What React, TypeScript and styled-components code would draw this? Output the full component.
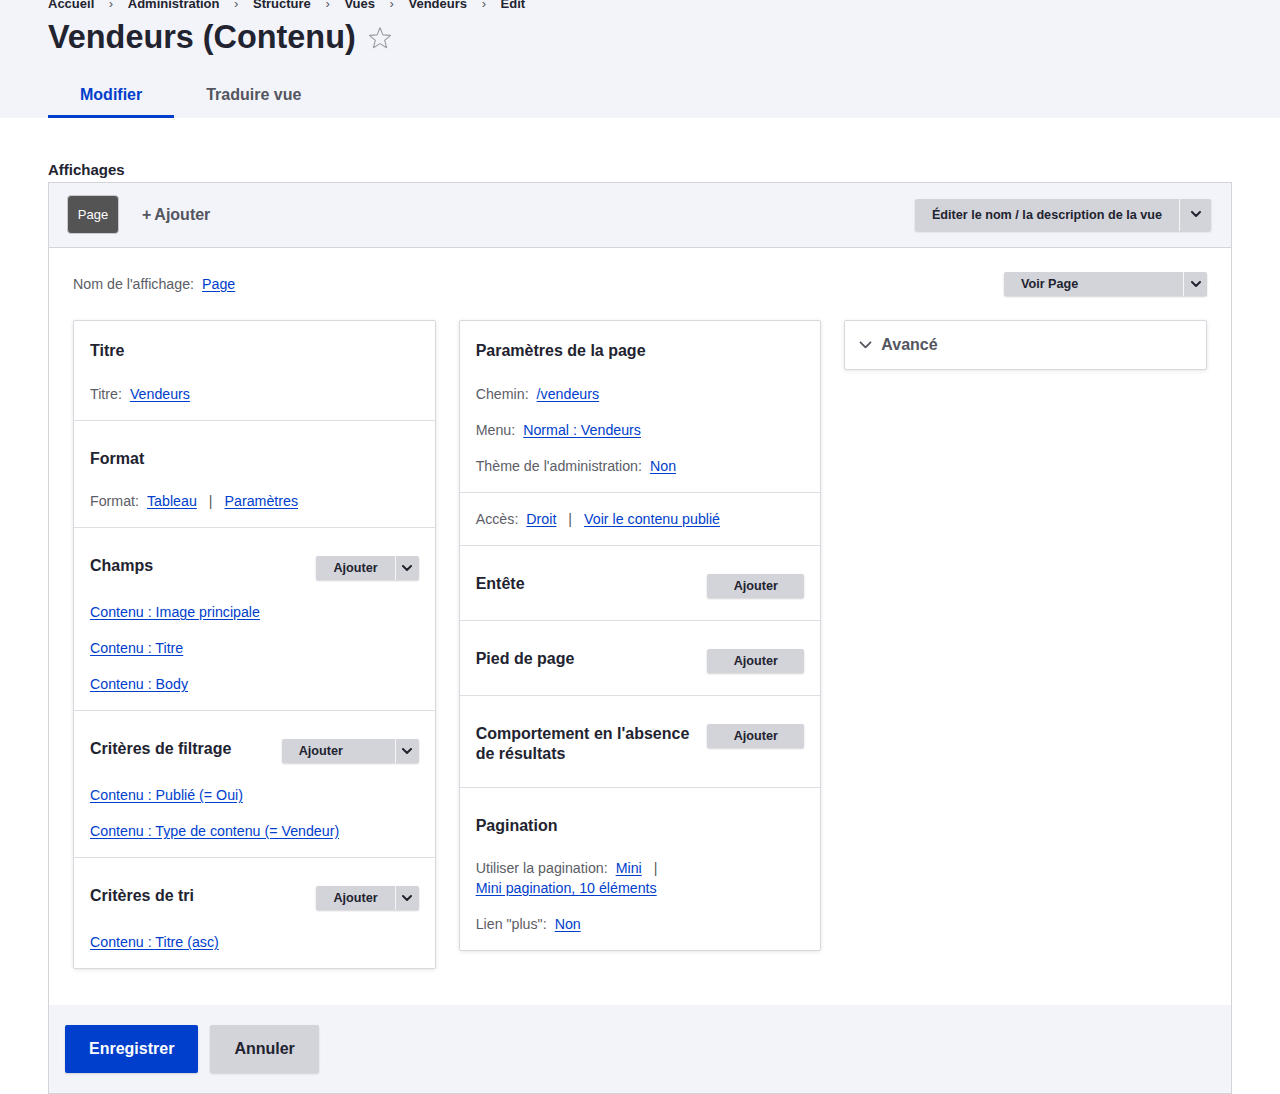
import React from 'react';
import styled, { createGlobalStyle } from 'styled-components';

const Global = createGlobalStyle`
  html, body { margin: 0; padding: 0; background: #fff; }
  body { font-family: "Liberation Sans", Arial, sans-serif; color: #222330; }
  * { box-sizing: border-box; }
`;

const Header = styled.header`
  display: flow-root;
  background: #f3f4f9;
  padding: 0 48px;
`;

const Breadcrumb = styled.nav`
  display: flex;
  align-items: center;
  margin-top: -4px;
  font-size: 13px;
  line-height: 16px;
  font-weight: 700;
  color: #222330;
`;

const Crumb = styled.span``;

const CrumbSep = styled.span`
  margin: 0 14.6px;
  font-weight: 400;
  color: #545560;
`;

const TitleRow = styled.div`
  display: flex;
  align-items: center;
  margin-top: 5px;
  height: 40px;
`;

const Title = styled.h1`
  margin: 0;
  font-size: 32.4px;
  line-height: 40px;
  font-weight: 700;
  color: #222330;
`;

const StarIcon = styled.svg`
  margin-left: 12px;
  margin-top: 2px;
`;

const Tabs = styled.div`
  display: flex;
  margin-top: 13px;
`;

const Tab = styled.span<{ $active?: boolean }>`
  height: 48px;
  padding: 2px 32px 0;
  line-height: 46px;
  font-size: 16px;
  font-weight: 700;
  color: ${p => (p.$active ? '#003ecc' : '#545560')};
  box-shadow: ${p => (p.$active ? 'inset 0 -3px 0 #003ecc' : 'none')};
`;

const Main = styled.main`
  padding: 42px 48px 0;
`;

const SectionTitle = styled.h2`
  margin: 0;
  font-size: 15px;
  line-height: 20px;
  font-weight: 700;
`;

const Container = styled.div`
  margin-top: 2px;
  border: 1px solid #d3d4d9;
  border-bottom: 0;
`;

const TopBar = styled.div`
  display: flex;
  align-items: center;
  height: 65px;
  padding: 0 20px 1px 18px;
  background: #f3f4f9;
  border-bottom: 1px solid #d3d4d9;
`;

const DisplayTab = styled.span`
  display: flex;
  align-items: center;
  justify-content: center;
  width: 52px;
  height: 39px;
  border-radius: 4px;
  background: #545454;
  border: 1px solid #c9cacf;
  color: #fff;
  font-size: 13px;
`;

const AddDisplay = styled.span`
  margin-left: 23px;
  font-size: 16px;
  font-weight: 700;
  color: #545560;
`;

const Plus = styled.span`
  margin-right: 3px;
`;

const Spacer = styled.div`
  flex: 1;
`;

const DropWrap = styled.div<{ $h: number }>`
  display: inline-flex;
  flex-shrink: 0;
  height: ${p => p.$h}px;
  border-radius: 2px;
  background: #d3d4d9;
  box-shadow: 0 1px 2px rgba(0, 0, 0, 0.18);
`;

const DropMain = styled.span<{ $w?: number }>`
  display: flex;
  align-items: center;
  padding: 0 17px;
  ${p => (p.$w ? `width: ${p.$w}px;` : '')}
  font-size: 12.64px;
  font-weight: 700;
  color: #222330;
  white-space: nowrap;
`;

const DropToggle = styled.span<{ $h: number }>`
  display: flex;
  align-items: center;
  justify-content: center;
  width: ${p => p.$h}px;
  border-left: 1px solid #f5f5f7;
`;

const SimpleButton = styled.span`
  display: flex;
  flex-shrink: 0;
  align-items: center;
  justify-content: center;
  width: 97px;
  height: 24px;
  border-radius: 2px;
  background: #d3d4d9;
  box-shadow: 0 1px 2px rgba(0, 0, 0, 0.18);
  font-size: 12.64px;
  font-weight: 700;
  color: #222330;
`;

const Body = styled.div`
  padding: 24px 24px 36px;
  background: #fff;
`;

const NameRow = styled.div`
  display: flex;
  align-items: center;
  height: 24px;
  font-size: 14.22px;
`;

const Grid = styled.div`
  display: grid;
  grid-template-columns: repeat(3, 1fr);
  gap: 23px;
  align-items: start;
  margin-top: 24px;
`;

const Card = styled.div`
  background: #fff;
  border: 1px solid #d8d9de;
  border-radius: 2px;
  box-shadow: 0 1px 4px rgba(0, 0, 0, 0.1);
`;

const Section = styled.div<{ $bottom?: number }>`
  padding: 16px 16px ${p => p.$bottom ?? 16}px;
  & + & {
    border-top: 1px solid #dedfe4;
  }
`;

const SectionHeader = styled.div<{ $first?: boolean }>`
  display: flex;
  align-items: flex-start;
  justify-content: space-between;
  gap: 16px;
  margin-top: ${p => (p.$first ? 4 : 12)}px;
`;

const Heading = styled.h3`
  margin: 0;
  font-size: 16px;
  line-height: 20px;
  font-weight: 700;
  color: #222330;
`;

const Rows = styled.div<{ $gap: number }>`
  display: flex;
  flex-direction: column;
  gap: 16px;
  margin-top: ${p => p.$gap}px;
`;

const Row = styled.div`
  font-size: 14.22px;
  line-height: 20px;
  color: #55565b;
`;

const Label = styled.span`
  color: #5c5d66;
  margin-right: 8px;
`;

const Link = styled.a`
  color: #003ecc;
  text-decoration: underline;
  text-underline-offset: 2px;
  white-space: nowrap;
  cursor: pointer;
`;

const Sep = styled.span`
  margin: 0 12px;
  color: #55565b;
`;

const AdvancedCard = styled(Card)`
  display: flex;
  align-items: center;
  height: 50px;
  padding-left: 14px;
  gap: 9px;
  font-size: 16px;
  font-weight: 700;
  color: #545560;
`;

const Footer = styled.div`
  display: flex;
  gap: 12px;
  padding: 20px 16px;
  background: #f3f4f9;
  border-bottom: 1px solid #d3d4d9;
`;

const FooterButton = styled.span<{ $primary?: boolean }>`
  display: flex;
  align-items: center;
  height: 48px;
  padding: 0 24px;
  border-radius: 2px;
  font-size: 16px;
  font-weight: 700;
  background: ${p => (p.$primary ? '#003ecc' : '#d3d4d9')};
  color: ${p => (p.$primary ? '#fff' : '#222330')};
  box-shadow: 0 1px 2px rgba(0, 0, 0, 0.15);
`;

const Chevron = ({ color = '#222330', w = 10, sw = 2 }: { color?: string; w?: number; sw?: number }) => (
  <svg width={w} height={w * 0.6 + 1} viewBox="0 0 10 7" fill="none">
    <path d="M1 1l4 4 4-4" stroke={color} strokeWidth={sw} strokeLinecap="round" strokeLinejoin="round" />
  </svg>
);

const Dropbutton = ({ label, h, w }: { label: string; h: number; w?: number }) => (
  <DropWrap $h={h}>
    <DropMain $w={w}>{label}</DropMain>
    <DropToggle $h={h}>
      <Chevron />
    </DropToggle>
  </DropWrap>
);

const crumbs = ['Accueil', 'Administration', 'Structure', 'Vues', 'Vendeurs', 'Edit'];

export default function App() {
  return (
    <>
      <Global />
      <Header>
        <Breadcrumb>
          {crumbs.map((c, i) => (
            <React.Fragment key={c}>
              {i > 0 && <CrumbSep>›</CrumbSep>}
              <Crumb>{c}</Crumb>
            </React.Fragment>
          ))}
        </Breadcrumb>
        <TitleRow>
          <Title>Vendeurs (Contenu)</Title>
          <StarIcon width="24" height="24" viewBox="0 0 24 24" fill="none">
            <path
              d="M12 1.8l2.9 7.1 7.6.5-5.8 4.9 1.9 7.4L12 17.6l-6.6 4.1 1.9-7.4-5.8-4.9 7.6-.5z"
              stroke="#9a9aa0"
              strokeWidth="1.1"
              strokeLinejoin="round"
            />
          </StarIcon>
        </TitleRow>
        <Tabs>
          <Tab $active>Modifier</Tab>
          <Tab>Traduire vue</Tab>
        </Tabs>
      </Header>
      <Main>
        <SectionTitle>Affichages</SectionTitle>
        <Container>
          <TopBar>
            <DisplayTab>Page</DisplayTab>
            <AddDisplay>
              <Plus>+</Plus>Ajouter
            </AddDisplay>
            <Spacer />
            <Dropbutton label="Éditer le nom / la description de la vue" h={32} />
          </TopBar>
          <Body>
            <NameRow>
              <Label>Nom de l'affichage:</Label>
              <Link>Page</Link>
              <Spacer />
              <Dropbutton label="Voir Page" h={24} w={179} />
            </NameRow>
            <Grid>
              <Card>
                <Section>
                  <SectionHeader $first>
                    <Heading>Titre</Heading>
                  </SectionHeader>
                  <Rows $gap={23}>
                    <Row>
                      <Label>Titre:</Label>
                      <Link>Vendeurs</Link>
                    </Row>
                  </Rows>
                </Section>
                <Section>
                  <SectionHeader>
                    <Heading>Format</Heading>
                  </SectionHeader>
                  <Rows $gap={22}>
                    <Row>
                      <Label>Format:</Label>
                      <Link>Tableau</Link>
                      <Sep>|</Sep>
                      <Link>Paramètres</Link>
                    </Row>
                  </Rows>
                </Section>
                <Section>
                  <SectionHeader>
                    <Heading>Champs</Heading>
                    <Dropbutton label="Ajouter" h={24} />
                  </SectionHeader>
                  <Rows $gap={22}>
                    <Row>
                      <Link>Contenu : Image principale</Link>
                    </Row>
                    <Row>
                      <Link>Contenu : Titre</Link>
                    </Row>
                    <Row>
                      <Link>Contenu : Body</Link>
                    </Row>
                  </Rows>
                </Section>
                <Section>
                  <SectionHeader>
                    <Heading>Critères de filtrage</Heading>
                    <Dropbutton label="Ajouter" h={24} w={113} />
                  </SectionHeader>
                  <Rows $gap={22}>
                    <Row>
                      <Link>Contenu : Publié (= Oui)</Link>
                    </Row>
                    <Row>
                      <Link>Contenu : Type de contenu (= Vendeur)</Link>
                    </Row>
                  </Rows>
                </Section>
                <Section>
                  <SectionHeader>
                    <Heading>Critères de tri</Heading>
                    <Dropbutton label="Ajouter" h={24} />
                  </SectionHeader>
                  <Rows $gap={22}>
                    <Row>
                      <Link>Contenu : Titre (asc)</Link>
                    </Row>
                  </Rows>
                </Section>
              </Card>

              <Card>
                <Section>
                  <SectionHeader $first>
                    <Heading>Paramètres de la page</Heading>
                  </SectionHeader>
                  <Rows $gap={23}>
                    <Row>
                      <Label>Chemin:</Label>
                      <Link>/vendeurs</Link>
                    </Row>
                    <Row>
                      <Label>Menu:</Label>
                      <Link>Normal : Vendeurs</Link>
                    </Row>
                    <Row>
                      <Label>Thème de l'administration:</Label>
                      <Link>Non</Link>
                    </Row>
                  </Rows>
                </Section>
                <Section>
                  <Row>
                    <Label>Accès:</Label>
                    <Link>Droit</Link>
                    <Sep>|</Sep>
                    <Link>Voir le contenu publié</Link>
                  </Row>
                </Section>
                <Section $bottom={22}>
                  <SectionHeader>
                    <Heading>Entête</Heading>
                    <SimpleButton>Ajouter</SimpleButton>
                  </SectionHeader>
                </Section>
                <Section $bottom={22}>
                  <SectionHeader>
                    <Heading>Pied de page</Heading>
                    <SimpleButton>Ajouter</SimpleButton>
                  </SectionHeader>
                </Section>
                <Section $bottom={23}>
                  <SectionHeader>
                    <Heading>Comportement en l'absence de résultats</Heading>
                    <SimpleButton>Ajouter</SimpleButton>
                  </SectionHeader>
                </Section>
                <Section>
                  <SectionHeader>
                    <Heading>Pagination</Heading>
                  </SectionHeader>
                  <Rows $gap={22}>
                    <Row>
                      <Label>Utiliser la pagination:</Label>
                      <Link>Mini</Link>
                      <Sep>|</Sep> <Link>Mini pagination, 10 éléments</Link>
                    </Row>
                    <Row>
                      <Label>Lien "plus":</Label>
                      <Link>Non</Link>
                    </Row>
                  </Rows>
                </Section>
              </Card>

              <AdvancedCard>
                <Chevron color="#545560" w={13} sw={1.4} />
                <span>Avancé</span>
              </AdvancedCard>
            </Grid>
          </Body>
          <Footer>
            <FooterButton $primary>Enregistrer</FooterButton>
            <FooterButton>Annuler</FooterButton>
          </Footer>
        </Container>
      </Main>
    </>
  );
}
